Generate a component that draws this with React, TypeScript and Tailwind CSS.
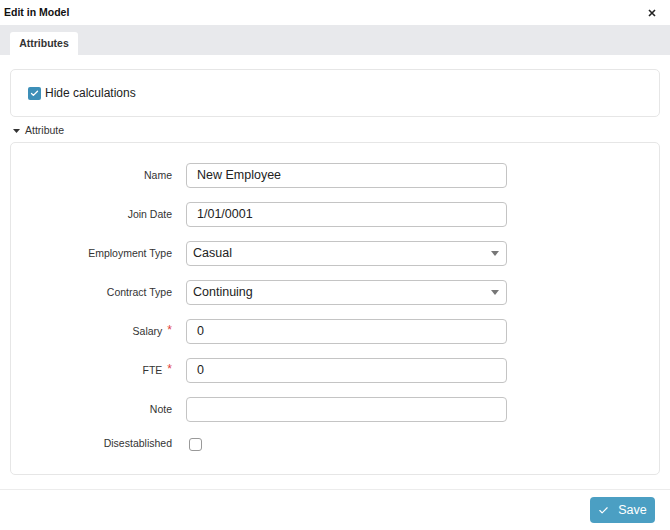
import { Check } from 'lucide-react'

const fields = [
  { label: 'Name', value: 'New Employee', kind: 'text' },
  { label: 'Join Date', value: '1/01/0001', kind: 'text' },
  { label: 'Employment Type', value: 'Casual', kind: 'select' },
  { label: 'Contract Type', value: 'Continuing', kind: 'select' },
  { label: 'Salary', value: '0', kind: 'text', required: true },
  { label: 'FTE', value: '0', kind: 'text', required: true },
  { label: 'Note', value: '', kind: 'text' },
]

function Field({ label, value, kind, required }: { label: string; value: string; kind: string; required?: boolean }) {
  return (
    <div className="flex items-center h-[25px]">
      <div className="w-[161px] flex justify-end items-center text-[10.5px] text-[#333]">
        <span>{label}</span>
        {required && <span className="ml-[5px] text-[#e04040] text-[12px] leading-none -mt-1">*</span>}
      </div>
      <div
        className={`ml-[14px] w-[321px] h-[25px] flex items-center justify-between border border-[#c4c4c4] rounded-[4px] bg-white text-[12.5px] text-[#222] ${
          kind === 'select' ? 'pl-[6px] pr-[7px]' : 'pl-[10px]'
        }`}
      >
        <span>{value}</span>
        {kind === 'select' && (
          <svg width="8" height="5" viewBox="0 0 8 5">
            <path d="M0 0h8L4 5z" fill="#777" />
          </svg>
        )}
      </div>
    </div>
  )
}

export default function App() {
  return (
    <div className="w-[670px] h-[530px] bg-white flex flex-col font-['Liberation_Sans',Arial,sans-serif] text-[#222]">
      <div className="h-[25px] flex items-center justify-between pl-[4px] pr-[14px]">
        <span className="text-[10.5px] font-bold text-[#111]">Edit in Model</span>
        <svg width="8" height="8" viewBox="0 0 8 8">
          <path d="M1 1l6 6M7 1L1 7" stroke="#222" strokeWidth="1.6" />
        </svg>
      </div>

      <div className="h-[30px] bg-[#e8e9ec] flex items-end pl-[10px]">
        <div className="h-[23px] w-[68px] bg-white rounded-t-[3px] flex items-center justify-center text-[10.5px] font-bold text-[#333]">
          Attributes
        </div>
      </div>

      <div className="px-[10px] pt-[14px]">
        <div className="h-[48px] border border-[#e6e6e6] rounded-[5px] flex items-center pl-[17px]">
          <div className="w-[13px] h-[13px] rounded-[2px] bg-[#3d8fb8] flex items-center justify-center">
            <Check size={9} strokeWidth={3.5} color="white" />
          </div>
          <span className="ml-[4px] text-[12px] text-[#222]">Hide calculations</span>
        </div>

        <div className="h-[25px] flex items-center pt-[3px] pl-[3px] text-[10.5px] text-[#333]">
          <svg width="7" height="4" viewBox="0 0 7 4" className="mr-[5px]">
            <path d="M0 0h7L3.5 4z" fill="#333" />
          </svg>
          Attribute
        </div>

        <div className="h-[333px] border border-[#e6e6e6] rounded-[5px] pt-[20px] flex flex-col gap-[14px]">
          {fields.map((f) => (
            <Field key={f.label} {...f} />
          ))}
          <div className="flex items-center h-[16px]">
            <div className="w-[161px] text-right text-[10.5px] text-[#333]">Disestablished</div>
            <div className="ml-[17px] w-[13px] h-[13px] border border-[#999] rounded-[3px] bg-white" />
          </div>
        </div>
      </div>

      <div className="mt-[14px] border-t border-[#ececec] flex justify-end pr-[15px] pt-[7px]">
        <button className="w-[65px] h-[26px] rounded-[4px] bg-[#4b9fc3] text-white text-[12.5px] flex items-center justify-center gap-[9px]">
          <Check size={11} strokeWidth={2.5} />
          <span>Save</span>
        </button>
      </div>
    </div>
  )
}
